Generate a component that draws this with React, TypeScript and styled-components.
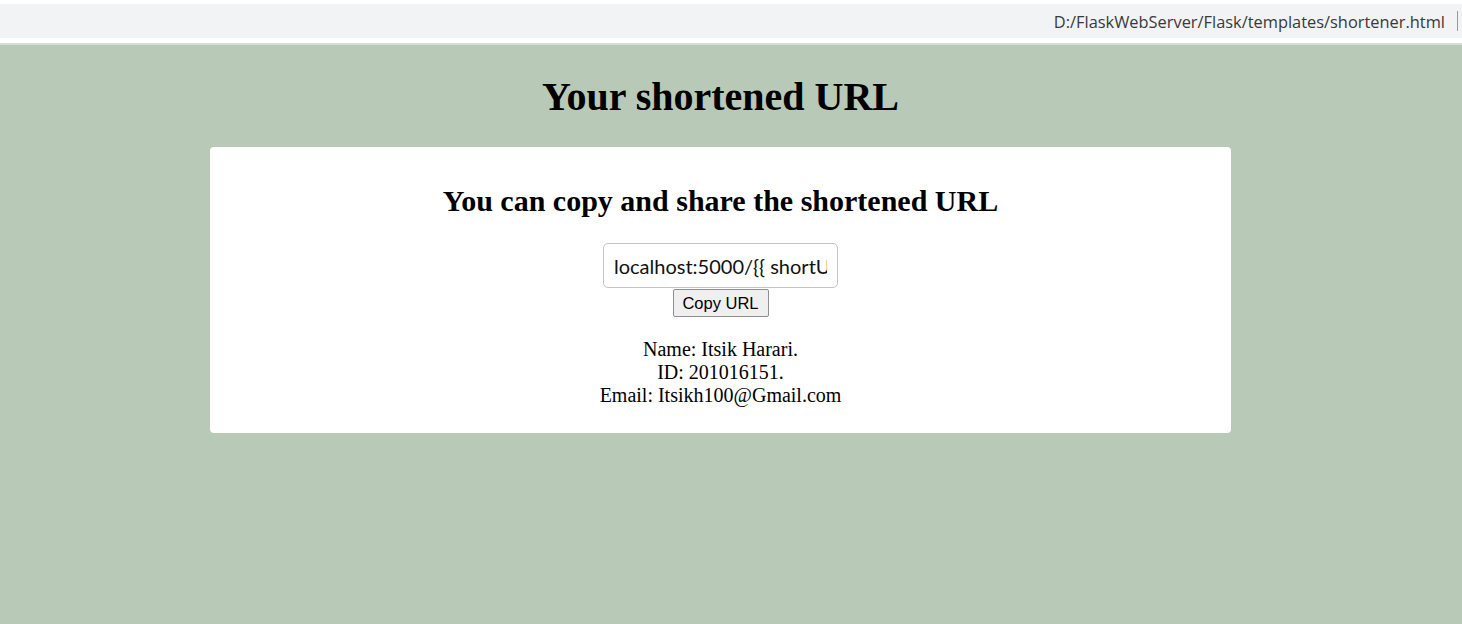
import React from "react";
import styled, { createGlobalStyle } from "styled-components";

const Global = createGlobalStyle`
  html, body { margin: 0; padding: 0; background: #b8c9b7; }
  #root { min-height: 624px; }
`;

const Page = styled.div`
  min-height: 624px;
  background: #b8c9b7;
  display: flex;
  flex-direction: column;
`;

const BrowserBar = styled.div`
  background: #ffffff;
  padding: 4px 0 5px 0;
  border-bottom: 2px solid #d5ddd5;
`;

const AddressStrip = styled.div`
  height: 34px;
  background: #f1f3f4;
  display: flex;
  align-items: center;
  justify-content: flex-end;
  padding-right: 4px;
  gap: 12px;
`;

const AddressText = styled.span`
  font-family: "Open Sans", "Noto Sans", sans-serif;
  font-size: 16.4px;
  color: #3a3a3a;
`;

const Separator = styled.span`
  width: 1px;
  height: 20px;
  background: #9a9a9a;
`;

const Main = styled.main`
  width: calc(100% - 21px);
  display: flex;
  flex-direction: column;
  align-items: center;
`;

const Title = styled.h1`
  font-family: "Liberation Serif", "Times New Roman", serif;
  font-size: 40px;
  font-weight: bold;
  color: #000;
  margin: 29px 0 27px 0;
  line-height: 46px;
`;

const Card = styled.section`
  width: 1021px;
  background: #fff;
  border-radius: 4px;
  display: flex;
  flex-direction: column;
  align-items: center;
  padding: 36px 0 26px 0;
  box-sizing: border-box;
`;

const Subtitle = styled.h2`
  font-family: "Liberation Serif", "Times New Roman", serif;
  font-size: 30px;
  font-weight: bold;
  margin: 0 0 24px 0;
  line-height: 36px;
  color: #000;
`;

const UrlInput = styled.input`
  width: 235px;
  height: 45px;
  box-sizing: border-box;
  border: 1px solid #c4c4c4;
  border-radius: 5px;
  padding: 0 10px;
  font-family: Lato, "Open Sans", sans-serif;
  font-size: 20px;
  color: #111;
  outline: none;
`;

const CopyButton = styled.button`
  font-family: "Liberation Sans", Arial, sans-serif;
  font-size: 16.5px;
  padding: 2px 8px;
  height: 28px;
  width: 96px;
  background: #efefef;
  border: 1px solid #8f8f8f;
  border-radius: 2px;
  color: #000;
  margin: 1px 0 0 0;
`;

const Info = styled.div`
  font-family: "Liberation Serif", "Times New Roman", serif;
  font-size: 20px;
  line-height: 23px;
  text-align: center;
  color: #000;
  margin-top: 21px;
`;

export default function App() {
  return (
    <Page>
      <Global />
      <BrowserBar>
        <AddressStrip>
          <AddressText>D:/FlaskWebServer/Flask/templates/shortener.html</AddressText>
          <Separator />
        </AddressStrip>
      </BrowserBar>
      <Main>
        <Title>Your shortened URL</Title>
        <Card>
          <Subtitle>You can copy and share the shortened URL</Subtitle>
          <UrlInput readOnly value="localhost:5000/{{ shortURL }}" />
          <CopyButton>Copy URL</CopyButton>
          <Info>
            Name: Itsik Harari.
            <br />
            ID: 201016151.
            <br />
            Email: Itsikh100@Gmail.com
          </Info>
        </Card>
      </Main>
    </Page>
  );
}
